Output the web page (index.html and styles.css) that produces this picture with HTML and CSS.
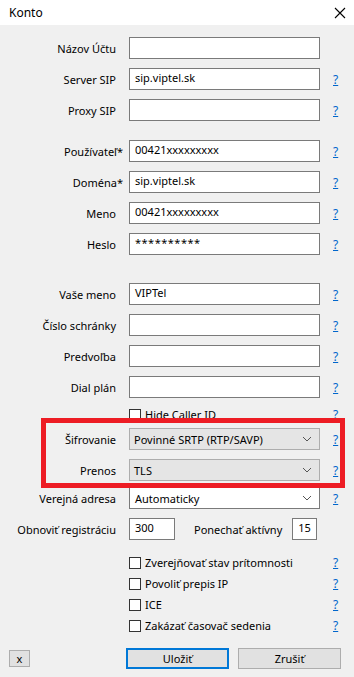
FILE: index.html
```html
<!DOCTYPE html>
<html lang="sk">
<head>
    <meta charset="UTF-8">
    <meta name="viewport" content="width=device-width, initial-scale=1.0">
    <title>Konto</title>
    <link rel="stylesheet" href="styles.css">
</head>
<body>
    <div class="titlebar">
        <span class="title">Konto</span>
        <svg class="close" width="12" height="12" viewBox="0 0 12 12">
            <path d="M1 1 L11 11 M11 1 L1 11" stroke="#000" stroke-width="1.1" fill="none"/>
        </svg>
    </div>

    <div class="form">
        <div class="row first">
            <label>Názov Účtu</label>
            <div class="field"></div>
            <span></span>
        </div>
        <div class="row">
            <label>Server SIP</label>
            <div class="field">sip.viptel.sk</div>
            <a class="help">?</a>
        </div>
        <div class="row">
            <label>Proxy SIP</label>
            <div class="field"></div>
            <a class="help">?</a>
        </div>

        <div class="row section">
            <label class="req">Používateľ*</label>
            <div class="field">00421xxxxxxxxx</div>
            <a class="help">?</a>
        </div>
        <div class="row">
            <label class="req">Doména*</label>
            <div class="field">sip.viptel.sk</div>
            <a class="help">?</a>
        </div>
        <div class="row">
            <label>Meno</label>
            <div class="field">00421xxxxxxxxx</div>
            <a class="help">?</a>
        </div>
        <div class="row">
            <label>Heslo</label>
            <div class="field pass">**********</div>
            <a class="help">?</a>
        </div>

        <div class="row section2">
            <label>Vaše meno</label>
            <div class="field">VIPTel</div>
            <a class="help">?</a>
        </div>
        <div class="row">
            <label>Číslo schránky</label>
            <div class="field"></div>
            <a class="help">?</a>
        </div>
        <div class="row">
            <label>Predvoľba</label>
            <div class="field"></div>
            <a class="help">?</a>
        </div>
        <div class="row">
            <label>Dial plán</label>
            <div class="field"></div>
            <a class="help">?</a>
        </div>

        <div class="row check-row hide-id">
            <span></span>
            <div class="check"><span class="box"></span>Hide Caller ID</div>
            <a class="help">?</a>
        </div>

        <div class="row sifr">
            <label>Šifrovanie</label>
            <div class="combo">Povinné SRTP (RTP/SAVP)
                <svg class="arrow" width="10" height="6" viewBox="0 0 10 6"><path d="M1 1 L5 5 L9 1" stroke="#555" fill="none"/></svg>
            </div>
            <a class="help">?</a>
        </div>
        <div class="row">
            <label>Prenos</label>
            <div class="combo">TLS
                <svg class="arrow" width="10" height="6" viewBox="0 0 10 6"><path d="M1 1 L5 5 L9 1" stroke="#555" fill="none"/></svg>
            </div>
            <a class="help">?</a>
        </div>
        <div class="row public">
            <label>Verejná adresa</label>
            <div class="combo edit">Automaticky
                <svg class="arrow" width="10" height="6" viewBox="0 0 10 6"><path d="M1 1 L5 5 L9 1" stroke="#555" fill="none"/></svg>
            </div>
            <a class="help">?</a>
        </div>
        <div class="row">
            <label>Obnoviť registráciu</label>
            <div class="pair">
                <div class="field small">300</div>
                <span class="pair-label">Ponechať aktívny</span>
                <div class="field tiny">15</div>
            </div>
            <span></span>
        </div>

        <div class="row check-row presence">
            <span></span>
            <div class="check"><span class="box"></span>Zverejňovať stav prítomnosti</div>
            <a class="help">?</a>
        </div>
        <div class="row check-row">
            <span></span>
            <div class="check"><span class="box"></span>Povoliť prepis IP</div>
            <a class="help">?</a>
        </div>
        <div class="row check-row">
            <span></span>
            <div class="check"><span class="box"></span>ICE</div>
            <a class="help">?</a>
        </div>
        <div class="row check-row">
            <span></span>
            <div class="check"><span class="box"></span>Zakázať časovač sedenia</div>
            <a class="help">?</a>
        </div>
    </div>

    <div class="buttons">
        <button class="btn-x">x</button>
        <button class="btn default">Uložiť</button>
        <button class="btn">Zrušiť</button>
    </div>

    <!-- red annotation frame over the encryption rows -->
    <div class="highlight"></div>
</body>
</html>
```

FILE: styles.css
```css
body {
    margin: 0;
    width: 354px;
    height: 677px;
    overflow: hidden;
    position: relative;
    background-color: #f0f0f0;
    font-family: "Noto Sans", sans-serif;
    font-size: 11px;
    color: #000;
}

.titlebar {
    height: 25px;
    background-color: #fff;
    display: flex;
    align-items: center;
    justify-content: space-between;
    padding: 0 9px;
}
.title {
    font-size: 12px;
}
.close {
    margin-right: -1px;
}

.form {
    display: flex;
    flex-direction: column;
    gap: 9px;
    padding-top: 12px;
}

.row {
    display: grid;
    grid-template-columns: 116px 191px 1fr;
    column-gap: 13px;
    align-items: center;
    height: 22px;
}
.row label {
    text-align: right;
    white-space: nowrap;
}
.row label.req {
    margin-right: -7px;
}
.section {
    margin-top: 10px;
}
.section2 {
    margin-top: 19px;
}

.field {
    box-sizing: border-box;
    height: 22px;
    background-color: #fff;
    border: 1px solid #7a7a7a;
    padding: 0 5px;
    line-height: 18px;
    white-space: nowrap;
}
.field.pass {
    letter-spacing: 0.5px;
}

.help {
    color: #0066cc;
    text-decoration: underline;
    font-size: 12px;
}

.check-row {
    height: 12px;
}
.check {
    display: flex;
    align-items: center;
    gap: 4px;
    white-space: nowrap;
    height: 12px;
}
.box {
    box-sizing: border-box;
    width: 12px;
    height: 12px;
    background-color: #fff;
    border: 1px solid #333;
    flex: none;
}
.hide-id {
    margin-top: -1px;
}
.sifr {
    margin-top: 1px;
}
.public {
    margin-top: -3px;
}
.presence {
    margin-top: 5px;
}

.combo {
    box-sizing: border-box;
    height: 22px;
    background-color: #e5e5e5;
    border: 1px solid #adadad;
    padding: 0 4px;
    display: flex;
    align-items: center;
    justify-content: space-between;
    white-space: nowrap;
}
.combo.edit {
    background-color: #fff;
    border-color: #7a7a7a;
    padding-left: 5px;
}
.arrow {
    margin-right: 3px;
}

.pair {
    display: flex;
    align-items: center;
}
.field.small {
    width: 46px;
}
.pair-label {
    margin-left: 19px;
    margin-right: 10px;
    white-space: nowrap;
}
.field.tiny {
    width: 25px;
}

.buttons {
    display: flex;
    align-items: center;
    margin-top: 19px;
    padding-left: 9px;
}
button {
    font-family: "Noto Sans", sans-serif;
    font-size: 11px;
    background-color: #e1e1e1;
    border: 1px solid #adadad;
    color: #000;
    padding: 0;
    margin: 0;
}
.btn-x {
    width: 21px;
    height: 17px;
    line-height: 13px;
    margin-right: 96px;
}
.btn {
    width: 103px;
    height: 21px;
    margin-right: 9px;
}
.btn.default {
    border: 2px solid #0078d7;
}

.highlight {
    position: absolute;
    left: 41px;
    top: 418px;
    width: 304px;
    height: 70px;
    box-sizing: border-box;
    border: 5px solid #ed1c24;
}
```
